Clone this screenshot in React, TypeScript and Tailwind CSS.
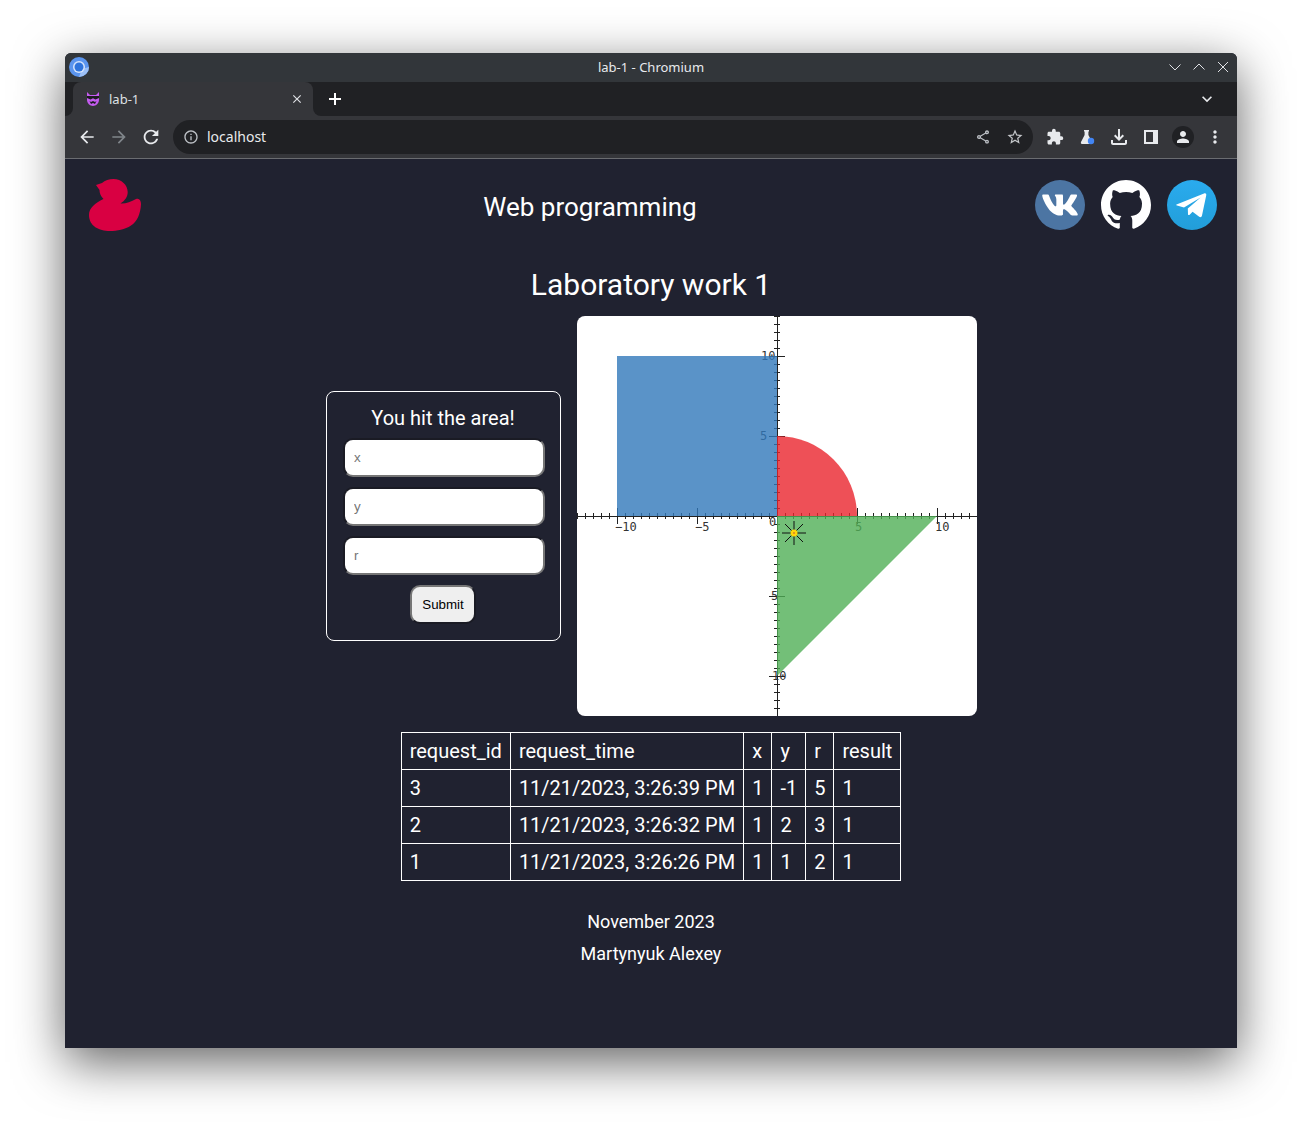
import { FaVk } from 'react-icons/fa';
import {
  MdArrowBack,
  MdArrowForward,
  MdClose,
  MdExtension,
  MdInfoOutline,
  MdKeyboardArrowDown,
  MdMoreVert,
  MdOutlineFileDownload,
  MdOutlineShare,
  MdPerson,
  MdRefresh,
  MdStarBorder,
} from 'react-icons/md';

const rows = [
  { id: 3, time: '11/21/2023, 3:26:39 PM', x: 1, y: -1, r: 5, result: 1 },
  { id: 2, time: '11/21/2023, 3:26:32 PM', x: 1, y: 2, r: 3, result: 1 },
  { id: 1, time: '11/21/2023, 3:26:26 PM', x: 1, y: 1, r: 2, result: 1 },
];

const headers = ['request_id', 'request_time', 'x', 'y', 'r', 'result'];

// axis ticks every half unit, 8px apart
const ticks = Array.from({ length: 51 }, (_, i) => i * 8);

function Chart() {
  return (
    <svg width="400" height="400" viewBox="0 0 400 400" className="block rounded-lg bg-white shrink-0">
      <g stroke="#222" strokeWidth="1" shapeRendering="crispEdges">
        <line x1="0" y1="200.5" x2="400" y2="200.5" />
        <line x1="200.5" y1="0" x2="200.5" y2="400" />
        {ticks.map((t) => {
          const size = t % 80 === 40 ? 8 : 3;
          return (
            <g key={t}>
              <line x1={t + 0.5} y1={200 - size} x2={t + 0.5} y2={200 + size} />
              <line x1={200 - size} y1={t + 0.5} x2={200 + size} y2={t + 0.5} />
            </g>
          );
        })}
      </g>
      <g fill="#333" fontFamily="'DejaVu Sans Mono', monospace" fontSize="12">
        <text x="184" y="44">10</text>
        <text x="183" y="124">5</text>
        <text x="192" y="210">0</text>
        <text x="38" y="215">−10</text>
        <text x="118" y="215">−5</text>
        <text x="278" y="215">5</text>
        <text x="358" y="215">10</text>
        <text x="194" y="284">5</text>
        <text x="195" y="364">10</text>
      </g>
      <rect x="40" y="40" width="160" height="160" fill="#3178ba" fillOpacity="0.8" />
      <path d="M200 120 A80 80 0 0 1 280 200 L200 200 Z" fill="#ea242d" fillOpacity="0.8" />
      <path d="M200 200 L360 200 L200 360 Z" fill="#50af56" fillOpacity="0.8" />
      <g stroke="#111" strokeWidth="1">
        <line x1="217" y1="205" x2="217" y2="229" />
        <line x1="205" y1="217" x2="229" y2="217" />
        <line x1="208" y1="208" x2="226" y2="226" />
        <line x1="226" y1="208" x2="208" y2="226" />
      </g>
      <circle cx="217" cy="217" r="3.5" fill="#ffd60a" />
      <circle cx="217" cy="217" r="1" fill="#d9822b" />
    </svg>
  );
}

function Duck() {
  return (
    <svg width="52" height="52" viewBox="0 0 52 52" className="shrink-0">
      <path
        fill="#d90042"
        d="M7 6 L13 4 C16 1.5 20 0 24.5 0 C32.5 0 38.7 6 38.7 13 C38.7 18 36 21.5 31.5 24.5 C36 25 42 23 47 20 C50 18.7 52 21 52 25 C51.5 35 48 43 42 46.5 C36 50.5 28 52 21 52 C10 52 0 47 0 36 C0 29 6 24 14.5 20 C11.5 17 10.5 14 10.5 11 Z"
      />
    </svg>
  );
}

function Socials() {
  return (
    <div className="flex items-center gap-4">
      <div className="w-[50px] h-[50px] rounded-full bg-[#4c75a3] flex items-center justify-center text-white">
        <FaVk size={38} />
      </div>
      <svg width="50" height="50" viewBox="0 0 16 16" fill="#fff">
        <path d="M8 0C3.58 0 0 3.58 0 8c0 3.54 2.29 6.53 5.47 7.59.4.07.55-.17.55-.38 0-.19-.01-.82-.01-1.49-2.01.37-2.53-.49-2.69-.94-.09-.23-.48-.94-.82-1.13-.28-.15-.68-.52-.01-.53.63-.01 1.08.58 1.23.82.72 1.21 1.87.87 2.33.66.07-.52.28-.87.51-1.07-1.78-.2-3.64-.89-3.64-3.95 0-.87.31-1.59.82-2.15-.08-.2-.36-1.02.08-2.12 0 0 .67-.21 2.2.82.64-.18 1.32-.27 2-.27.68 0 1.36.09 2 .27 1.53-1.04 2.2-.82 2.2-.82.44 1.1.16 1.92.08 2.12.51.56.82 1.27.82 2.15 0 3.07-1.87 3.75-3.65 3.95.29.25.54.73.54 1.48 0 1.07-.01 1.93-.01 2.2 0 .21.15.46.55.38A8.013 8.013 0 0016 8c0-4.42-3.58-8-8-8z" />
      </svg>
      <svg width="50" height="50" viewBox="0 0 50 50">
        <defs>
          <linearGradient id="tg" x1="0" y1="0" x2="0" y2="1">
            <stop offset="0" stopColor="#2aabee" />
            <stop offset="1" stopColor="#229ed9" />
          </linearGradient>
        </defs>
        <circle cx="25" cy="25" r="25" fill="url(#tg)" />
        <path fill="#fff" d="M9.5 24.6 L37 13.4 C38.6 12.8 39.6 13.6 39.2 15.6 L35 35.6 C34.6 37.2 33.6 37.6 32.2 36.8 L25.6 31.8 L22.4 34.9 C21.8 35.4 21 35 21 34.2 L20.8 28.4 L33.6 17.6 L17 27.4 L10 25.6 C9 25.4 9 24.9 9.5 24.6 Z" />
      </svg>
    </div>
  );
}

function Field({ name }: { name: string }) {
  return (
    <input
      placeholder={name}
      className="w-[202px] h-[39px] rounded-[10px] bg-white px-[9px] text-[13.33px] text-black border-2 border-t-[#1a1b24] border-l-[#1a1b24] border-r-[#767676] border-b-[#767676] placeholder:text-[#757575] font-['Liberation_Sans',sans-serif]"
    />
  );
}

function HitForm() {
  return (
    <div className="w-[235px] h-[250px] shrink-0 rounded-lg border border-white flex flex-col items-center pt-[13px]">
      <h2 className="text-[20px] leading-[27px] text-white">You hit the area!</h2>
      <div className="mt-[6px] ml-[2px] flex flex-col gap-[10px]">
        <Field name="x" />
        <Field name="y" />
        <Field name="r" />
      </div>
      <button
        type="button"
        className="mt-[10px] w-[66px] h-[39px] rounded-[10px] bg-[#efefef] text-black text-[13.33px] border-2 border-t-[#767676] border-l-[#767676] border-r-[#1a1b24] border-b-[#1a1b24] font-['Liberation_Sans',sans-serif]"
      >
        Submit
      </button>
    </div>
  );
}

function ResultsTable() {
  return (
    <table className="mt-4 mx-auto border-collapse text-[20px] leading-[23px] text-white">
      <thead>
        <tr>
          {headers.map((h) => (
            <th key={h} className="border border-white px-2 h-[37px] font-normal text-left">{h}</th>
          ))}
        </tr>
      </thead>
      <tbody>
        {rows.map((row) => (
          <tr key={row.id}>
            <td className="border border-white px-2 h-[37px]">{row.id}</td>
            <td className="border border-white px-2 h-[37px]">{row.time}</td>
            <td className="border border-white px-2 h-[37px]">{row.x}</td>
            <td className="border border-white px-2 h-[37px]">{row.y}</td>
            <td className="border border-white px-2 h-[37px]">{row.r}</td>
            <td className="border border-white px-2 h-[37px]">{row.result}</td>
          </tr>
        ))}
      </tbody>
    </table>
  );
}

function WindowControls() {
  return (
    <div className="absolute right-[8px] top-[8px] flex gap-[12px]">
      <svg width="12" height="12" viewBox="0 0 12 12" fill="none" stroke="#dfe1e5" strokeWidth="1">
        <path d="M0.5 3.5 L6 9 L11.5 3.5" />
      </svg>
      <svg width="12" height="12" viewBox="0 0 12 12" fill="none" stroke="#dfe1e5" strokeWidth="1">
        <path d="M0.5 8.5 L6 3 L11.5 8.5" />
      </svg>
      <svg width="12" height="12" viewBox="0 0 12 12" fill="none" stroke="#dfe1e5" strokeWidth="1">
        <path d="M1 1 L11 11 M11 1 L1 11" />
      </svg>
    </div>
  );
}

function BrowserChrome() {
  return (
    <div className="font-['Noto_Sans',sans-serif] text-[#e8eaed]">
      <div className="relative h-[29px] bg-[#32363a] flex items-center justify-center text-[13px] rounded-t-md">
        <svg width="22" height="22" viewBox="0 0 22 22" className="absolute left-[3px] top-[3px]">
          <circle cx="11" cy="11" r="10" fill="#5b95ee" />
          <path d="M11 21 A10 10 0 0 0 21 11 L14 13 Z" fill="#9cc0f7" />
          <circle cx="11" cy="11" r="6" fill="#d5e4fb" />
          <circle cx="11" cy="11" r="4.5" fill="#2f74dc" />
        </svg>
        lab-1 - Chromium
        <WindowControls />
      </div>
      <div className="h-[34px] flex">
        <div className="bg-[#35363a]">
          <div className="w-2 h-full bg-[#202124] rounded-br-lg" />
        </div>
        <div className="bg-[#202124]">
          <div className="w-[240px] h-[34px] bg-[#35363a] rounded-t-lg flex items-center pl-[13px] pr-[9px] text-[13px] text-[#dfe1e5]">
            <svg width="14" height="14" viewBox="0 0 14 14" className="mr-[9px]">
              <path fill="#c45cf0" d="M1 0 L4 3 H10 L13 0 V8 C13 11 10 14 7 14 C4 14 1 11 1 8 Z" />
              <path fill="#1c1c20" d="M1 4 H13 V6 L9.5 7.5 L7 6.2 L4.5 7.5 L1 6 Z" />
              <path fill="#1c1c20" d="M3.5 9 L5 10 L7 9 L9 10 L10.5 9 L9 12 L7 11 L5 12 Z" />
            </svg>
            <span className="flex-1 pt-px">lab-1</span>
            <MdClose size={14} />
          </div>
        </div>
        <div className="flex-1 bg-[#35363a]">
          <div className="h-full bg-[#202124] rounded-bl-lg flex items-center pl-[15px] pr-[20px]">
            <svg width="14" height="14" viewBox="0 0 14 14" stroke="#fff" strokeWidth="2">
              <path d="M7 1 V13 M1 7 H13" />
            </svg>
            <MdKeyboardArrowDown size={20} className="ml-auto" />
          </div>
        </div>
      </div>
      <div className="h-[42px] bg-[#35363a] flex items-center pl-[12px]">
        <MdArrowBack size={20} />
        <MdArrowForward size={20} className="ml-[12px] text-[#80868b]" />
        <MdRefresh size={22} className="ml-[11px]" />
        <div className="ml-[11px] w-[860px] h-[34px] rounded-full bg-[#202124] flex items-center pl-[10px] pr-[9px] text-[14px]">
          <MdInfoOutline size={16} className="text-[#bdc1c6]" />
          <span className="ml-[8px] flex-1 mb-[2px]">localhost</span>
          <MdOutlineShare size={16} className="text-[#bdc1c6]" />
          <MdStarBorder size={18} className="ml-[15px] text-[#c4c7ca]" />
        </div>
        <MdExtension size={18} className="ml-[13px]" />
        <svg width="16" height="16" viewBox="0 0 16 16" className="ml-[15px]">
          <path fill="#e8eaed" d="M5 1 H10 V2.5 H9.4 V6 L13 13 C13.4 14 13 15 12 15 H3 C2 15 1.6 14 2 13 L5.6 6 V2.5 H5 Z" />
          <circle cx="12" cy="12" r="3.2" fill="#4285f4" />
        </svg>
        <MdOutlineFileDownload size={24} className="ml-[12px]" />
        <svg width="14" height="14" viewBox="0 0 14 14" className="ml-[13px]">
          <path fill="#e8eaed" fillRule="evenodd" d="M0 0 H14 V14 H0 Z M2 2 V12 H9 V2 Z" />
        </svg>
        <div className="ml-[14px] w-[22px] h-[22px] rounded-full bg-[#202124] flex items-center justify-center">
          <MdPerson size={18} />
        </div>
        <MdMoreVert size={20} className="ml-[11px]" />
      </div>
      <div className="h-px bg-[#6a6c70]" />
    </div>
  );
}

export default function App() {
  return (
    <div className="w-[1302px] h-[1125px] bg-white overflow-hidden pt-[53px] pl-[65px]">
      <div className="w-[1172px] h-[995px] bg-[#202230] rounded-t-md shadow-[0_14px_50px_rgba(0,0,0,0.62)] flex flex-col">
        <BrowserChrome />
        <main className="flex-1 font-['Roboto',sans-serif] text-white">
          <header className="flex items-center justify-between pl-6 pr-5 pt-5">
            <Duck />
            <h1 className="text-[26px] leading-[32px] ml-[4px] mt-[4px]">Web programming</h1>
            <Socials />
          </header>
          <h2 className="mt-[36px] text-center text-[30px] leading-[35px]">Laboratory work 1</h2>
          <div className="mt-[14px] flex items-center justify-center gap-4">
            <HitForm />
            <Chart />
          </div>
          <ResultsTable />
          <footer className="mt-[25px] text-center text-[18px] leading-[32px]">
            <p>November 2023</p>
            <p>Martynyuk Alexey</p>
          </footer>
        </main>
      </div>
    </div>
  );
}
